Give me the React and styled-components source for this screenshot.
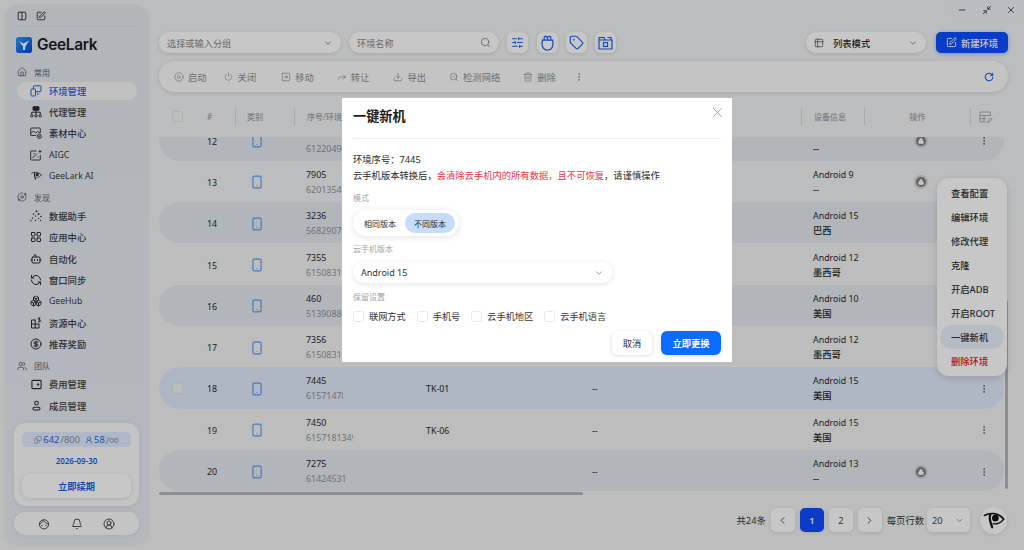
import styled, { createGlobalStyle } from 'styled-components';
import {
	Bell,
	Bot,
	Boxes,
	ChevronDown,
	ChevronLeft,
	ChevronRight,
	CircleDollarSign,
	CirclePlay,
	Columns2,
	CircleUserRound,
	Download,
	EllipsisVertical,
	Forward,
	House,
	LayoutGrid,
	Lock,
	Minimize2,
	Minus,
	Orbit,
	Power,
	RefreshCcw,
	RotateCw,
	Search,
	SearchCheck,
	SlidersHorizontal,
	Smartphone,
	SquareArrowRight,
	SquarePen,
	Table2,
	Tag,
	Trash2,
	UserRound,
	Users,
	X,
} from 'lucide-react';

const GlobalStyle = createGlobalStyle`
	html, body {
		margin: 0;
		padding: 0;
		overflow: hidden;
		background: #f3f4f5;
		font-family: "Noto Sans", "Noto Sans CJK SC", sans-serif;
		color: #222;
	}
	* {
		box-sizing: border-box;
	}
`;

const LogoMark = () => (
	<svg width='16' height='16' viewBox='0 0 16 16'>
		<defs>
			<linearGradient id='logoFill' x1='0' y1='0' x2='1' y2='1'>
				<stop offset='0' stopColor='#2a9bff' />
				<stop offset='1' stopColor='#0b45d8' />
			</linearGradient>
		</defs>
		<rect width='16' height='16' rx='2.5' fill='url(#logoFill)' />
		<path d='M3 4.2 L7.4 6.6 L13 3.6 L9.6 9 L8.9 13 L7 13 L7 9.2 Z' fill='#fff' />
	</svg>
);

const EnvIcon = ({ size = 12 }) => (
	<svg width={size} height={size} viewBox='0 0 12 12' fill='none' stroke='currentColor' strokeWidth='1'>
		<rect x='1' y='4' width='4.5' height='7' rx='0.8' />
		<path d='M3.5 4 V1.5 a0.7 0.7 0 0 1 0.7 -0.7 H10.3 a0.7 0.7 0 0 1 0.7 0.7 V6 a0.7 0.7 0 0 1 -0.7 0.7 H5.5' />
		<path d='M7 9 H9' />
	</svg>
);

const EyeMark = ({ size = 10 }) => (
	<svg width={size} height={size} viewBox='0 0 24 24' fill='none' stroke='currentColor' strokeLinecap='round'>
		<path d='M1.5 7 C8 3.5 17 4 22.5 11' strokeWidth='1.8' />
		<path d='M8 6 C6 10 8 14 10 20' strokeWidth='2.4' />
		<circle cx='13.5' cy='10' r='3.6' fill='currentColor' stroke='none' />
		<path d='M11 16 C15 17 20 15 22.5 11' strokeWidth='1.4' />
	</svg>
);

const ProxyIcon = ({ size = 12 }) => (
	<svg width={size} height={size} viewBox='0 0 12 12' fill='none' stroke='currentColor' strokeWidth='1'>
		<rect x='3' y='0.7' width='6' height='3.6' rx='0.5' fill='currentColor' />
		<path d='M6 4.3 V8 M1.7 8 V6.2 H10.3 V8' />
		<circle cx='1.8' cy='9.8' r='1.2' />
		<circle cx='6' cy='9.8' r='1.2' />
		<circle cx='10.2' cy='9.8' r='1.2' />
	</svg>
);

const MaterialIcon = ({ size = 12 }) => (
	<svg width={size} height={size} viewBox='0 0 12 12' fill='none' stroke='currentColor' strokeWidth='0.9'>
		<path d='M6 8.5 H1.2 a0.5 0.5 0 0 1 -0.5 -0.5 V1.5 a0.5 0.5 0 0 1 0.5 -0.5 H9.8 a0.5 0.5 0 0 1 0.5 0.5 V6' />
		<path d='M0.8 6.5 L3.5 4 L5.5 6 L7.5 4.5 L10 6' />
		<circle cx='9.3' cy='9.3' r='2.1' />
		<path d='M9.3 8.3 V10.3 M8.3 9.3 H10.3' strokeWidth='0.7' />
	</svg>
);

const AigcIcon = ({ size = 12 }) => (
	<svg width={size} height={size} viewBox='0 0 12 12' fill='none' stroke='currentColor' strokeWidth='0.9'>
		<path d='M6.5 2 H1.2 a0.5 0.5 0 0 0 -0.5 0.5 V10.5 a0.5 0.5 0 0 0 0.5 0.5 H9.8 a0.5 0.5 0 0 0 0.5 -0.5 V6' />
		<path d='M2.5 9 L7 4.5' />
		<path d='M10 0.5 L10.6 1.9 L12 2.5 L10.6 3.1 L10 4.5 L9.4 3.1 L8 2.5 L9.4 1.9 Z' fill='currentColor' stroke='none' />
		<circle cx='4' cy='4.7' r='0.6' fill='currentColor' stroke='none' />
		<circle cx='8' cy='8' r='0.6' fill='currentColor' stroke='none' />
	</svg>
);

const WalletIcon = ({ size = 11 }) => (
	<svg width={size} height={size} viewBox='0 0 12 12' fill='none' stroke='currentColor' strokeWidth='1.2'>
		<rect x='1' y='1.5' width='10' height='9' rx='1' />
		<rect x='6.5' y='5' width='2.5' height='2' rx='0.5' fill='currentColor' stroke='none' />
	</svg>
);

const MemberIcon = ({ size = 11 }) => (
	<svg width={size} height={size} viewBox='0 0 12 12' fill='none' stroke='currentColor' strokeWidth='1.1'>
		<circle cx='6' cy='3.4' r='2.1' />
		<rect x='2.2' y='8' width='7.6' height='2.8' rx='1.2' />
	</svg>
);

const FaceIcon = ({ size = 12 }) => (
	<svg width={size} height={size} viewBox='0 0 12 12' fill='none' stroke='currentColor' strokeWidth='0.9'>
		<circle cx='6' cy='6.3' r='4.6' />
		<path d='M1.4 6 C3 5.6 4.5 4.2 5.2 2.4 C6.6 4.6 8.8 5.6 10.6 6' />
		<circle cx='4' cy='7.6' r='0.7' fill='currentColor' stroke='none' />
		<circle cx='8' cy='7.6' r='0.7' fill='currentColor' stroke='none' />
	</svg>
);

const ResourceIcon = ({ size = 12 }) => (
	<svg width={size} height={size} viewBox='0 0 12 12' fill='none' stroke='currentColor' strokeWidth='1'>
		<path d='M6 3 H1.5 V11 H9 V6.5 M1.5 7 H9 M5.2 3 V11' />
		<path d='M10.5 1.2 C9 0.5 7.6 1 8 2 C8.4 3 10.6 2.6 10.8 3.8 C11 4.8 9.2 5 8 4.4 M9.4 0.4 V5.2' strokeWidth='0.8' />
	</svg>
);

const ScatterIcon = ({ size = 12 }) => (
	<svg width={size} height={size} viewBox='0 0 12 12' fill='currentColor'>
		<circle cx='6.5' cy='1.2' r='0.9' />
		<circle cx='3.5' cy='4' r='0.8' />
		<circle cx='8.5' cy='4' r='0.9' />
		<circle cx='5.5' cy='6' r='0.7' />
		<circle cx='11' cy='6.5' r='0.8' />
		<circle cx='8.5' cy='8.5' r='0.7' />
		<circle cx='2.5' cy='8' r='0.7' />
		<circle cx='1' cy='10.8' r='0.7' />
		<circle cx='5.5' cy='10.5' r='0.7' />
		<circle cx='10.5' cy='10.5' r='0.7' />
	</svg>
);

const BagIcon = () => (
	<svg width='15' height='16' viewBox='0 0 15 16' fill='none' stroke='currentColor' strokeWidth='1.2'>
		<path d='M2.3 5.2 H12.7 C13.5 9.5 12.8 15 7.5 15 C2.2 15 1.5 9.5 2.3 5.2 Z' />
		<path d='M4.2 5.2 V2 C5.2 1 6.5 1.4 7.5 2.4 C8.5 1.4 9.8 1 10.8 2 V5.2 M7.5 2.4 V5.2' />
	</svg>
);

const FolderIcon = () => (
	<svg width='15' height='14' viewBox='0 0 15 14' fill='none' stroke='currentColor' strokeWidth='1.2'>
		<path d='M1 4 V13 H14 V4 Z M1 4 V1.5 H6 L7 4' />
		<rect x='5.5' y='6.5' width='4' height='4' />
		<path d='M9.5 1.5 H13 V4' />
	</svg>
);

const TableEditIcon = () => (
	<svg width='14' height='14' viewBox='0 0 14 14' fill='none' stroke='currentColor' strokeWidth='0.9'>
		<path d='M6.5 12 H1.5 a0.5 0.5 0 0 1 -0.5 -0.5 V2.5 a0.5 0.5 0 0 1 0.5 -0.5 H11 a0.5 0.5 0 0 1 0.5 0.5 V6 M1 5.5 H11.5 M1 8.7 H7 M5 5.5 V12' />
		<path d='M8.5 12.5 L9 10.5 L12 7.8 L13.2 9 L10.3 12 Z' />
	</svg>
);

const Page = styled.div`
	position: relative;
	width: 1024px;
	height: 550px;
	display: flex;
	overflow: hidden;
	background: linear-gradient(180deg, #f1f3f5, #f3f3f4);
`;

const Sidebar = styled.aside`
	width: 143px;
	margin: 5px 0 6px 5px;
	padding: 0 9px 9px;
	display: flex;
	flex-direction: column;
	border-radius: 12px;
	background: linear-gradient(180deg, #e4e8ee, #e8ecf3);
	box-shadow: 0 1px 6px rgba(0, 0, 0, 0.05);
`;

const SideTop = styled.div`
	height: 22px;
	flex-shrink: 0;
	padding-left: 3px;
	display: flex;
	align-items: center;
	gap: 9px;
	border-bottom: 1px solid #dcdfe5;
	color: #333;
`;

const LogoRow = styled.div`
	height: 35.5px;
	flex-shrink: 0;
	padding-left: 2px;
	display: flex;
	align-items: center;
	gap: 5px;
`;

const LogoText = styled.span`
	font-family: Inter, sans-serif;
	font-size: 15.4px;
	font-weight: 600;
	letter-spacing: -0.3px;
	color: #1a1d24;
`;

const SectionTitle = styled.div`
	height: 19px;
	flex-shrink: 0;
	margin-left: 3px;
	display: flex;
	align-items: center;
	gap: 7px;
	font-size: 8px;
	color: #5d6066;
`;

const SectionIcon = styled.span`
	width: 10px;
	display: flex;
	justify-content: center;
	color: #555;
`;

const NavItem = styled.div`
	height: 18.3px;
	flex-shrink: 0;
	margin: 0 2px 3px 3px;
	padding-left: 13px;
	display: flex;
	align-items: center;
	gap: 7px;
	border-radius: 9px;
	font-size: ${(props) => (props.$latin ? 8.7 : 9.3)}px;
	font-weight: ${(props) => (props.$latin ? 400 : 500)};
	color: ${(props) => (props.$active ? '#1e5fe6' : '#3a3c40')};
	background: ${(props) => (props.$active ? '#f8f8f9' : 'transparent')};
`;

const NavIcon = styled.span`
	width: 12px;
	display: flex;
	justify-content: center;
	color: ${(props) => (props.$active ? '#1e5fe6' : '#2c2c2e')};
`;

const PlanCard = styled.div`
	margin-top: auto;
	height: 83px;
	padding: 9px 8px 8px;
	display: flex;
	flex-direction: column;
	align-items: stretch;
	border-radius: 12px;
	background: #fbfbfb;
	box-shadow: 0 1px 5px rgba(0, 0, 0, 0.08);
`;

const Quota = styled.div`
	height: 15px;
	display: flex;
	align-items: center;
	justify-content: center;
	gap: 5px;
	border-radius: 5px;
	background: #dfecff;
	font-size: 9.4px;
	color: #8b8f96;
`;

const QuotaPart = styled.span`
	display: flex;
	align-items: center;
	gap: 1px;
	white-space: nowrap;
`;

const QuotaValue = styled.span`
	color: #2a66d8;
`;

const PlanDate = styled.div`
	height: 27px;
	padding-bottom: 1px;
	display: flex;
	align-items: center;
	justify-content: center;
	font-size: 8px;
	font-weight: 600;
	color: #1e5fe6;
`;

const RenewButton = styled.div`
	height: 24px;
	display: flex;
	align-items: center;
	justify-content: center;
	border-radius: 8px;
	background: #fff;
	box-shadow: 0 1px 5px rgba(0, 0, 0, 0.12);
	font-size: 9.3px;
	font-weight: 700;
	color: #1e5fe6;
`;

const SideBar2 = styled.div`
	height: 23px;
	margin-top: 6px;
	padding: 0 24px;
	display: flex;
	align-items: center;
	justify-content: space-between;
	border-radius: 11px;
	background: #fbfbfb;
	box-shadow: 0 1px 4px rgba(0, 0, 0, 0.07);
	color: #3a3a3a;
`;

const Main = styled.main`
	flex: 1;
	min-width: 0;
	padding: 0 16px 0 11px;
	display: flex;
	flex-direction: column;
`;

const TitleBar = styled.div`
	height: 32px;
	flex-shrink: 0;
	margin-right: -16px;
	display: flex;
	justify-content: flex-end;
	align-items: flex-start;
`;

const WindowControls = styled.div`
	width: 74px;
	height: 20px;
	padding: 0 8px 0 7px;
	display: flex;
	align-items: center;
	justify-content: space-between;
	border-bottom-left-radius: 7px;
	background: #eef1f6;
	color: #333;
`;

const ToolRow = styled.div`
	height: 21px;
	flex-shrink: 0;
	display: flex;
	align-items: center;
`;

const PillField = styled.div`
	width: ${(props) => props.$w}px;
	height: 21px;
	margin-right: ${(props) => props.$mr || 0}px;
	padding: 0 8px;
	display: flex;
	align-items: center;
	justify-content: space-between;
	border-radius: 10.5px;
	background: #fff;
	box-shadow: 0 1px 4px rgba(0, 0, 0, 0.12);
	font-size: 9.2px;
	color: #85888d;
`;

const FieldIcon = styled.span`
	display: flex;
	color: #8a8d92;
`;

const IconButton = styled.div`
	width: 21px;
	height: 21px;
	margin-left: ${(props) => props.$ml}px;
	display: flex;
	align-items: center;
	justify-content: center;
	border-radius: 6px;
	background: #fff;
	box-shadow: 0 1px 4px rgba(0, 0, 0, 0.12);
	color: #1e5fe6;
`;

const ModeSelect = styled.div`
	width: 120px;
	height: 21px;
	margin-left: auto;
	padding: 0 8px;
	display: flex;
	align-items: center;
	gap: 9px;
	border-radius: 10.5px;
	background: #fff;
	box-shadow: 0 1px 4px rgba(0, 0, 0, 0.12);
	font-size: 9.3px;
	font-weight: 500;
	color: #2a2a2a;
`;

const ModeArrow = styled.span`
	margin-left: auto;
	display: flex;
	color: #8a8d92;
`;

const NewButton = styled.div`
	width: 72px;
	height: 21px;
	margin-left: 10px;
	display: flex;
	align-items: center;
	justify-content: center;
	gap: 4px;
	border-radius: 5px;
	background: #0d4dff;
	box-shadow: 0 1px 4px rgba(13, 77, 255, 0.4);
	font-size: 9.3px;
	font-weight: 500;
	color: #fff;
`;

const ActionBar = styled.div`
	height: 31px;
	flex-shrink: 0;
	margin-top: 8px;
	padding: 0 14px 0 15px;
	display: flex;
	align-items: center;
	gap: 23px;
	border-radius: 15.5px;
	background: #fbfbfb;
	box-shadow: 0 1px 5px rgba(0, 0, 0, 0.12);
`;

const ActionItem = styled.div`
	display: flex;
	align-items: center;
	gap: 4px;
	margin-right: ${(props) => props.$mr || 0}px;
	font-size: 9.3px;
	color: #8e9196;
`;

const ActionIcon = styled.span`
	width: 10px;
	display: flex;
	justify-content: center;
	color: #94979c;
`;

const RefreshIcon = styled.span`
	margin-left: auto;
	display: flex;
	color: #1e5fe6;
`;

const TableWrap = styled.div`
	position: relative;
	flex-shrink: 0;
	margin-top: 8px;
`;

const HeadRow = styled.div`
	width: 845px;
	height: 36.5px;
	display: grid;
	grid-template-columns: 40px 36px 59px 507px 63px 106px 34px;
	align-items: center;
	padding-bottom: 3px;
	font-size: 8px;
	font-weight: 500;
	color: #9ea2a8;
`;

const HeadCell = styled.div`
	height: 18px;
	padding-left: ${(props) => props.$pl || 0}px;
	padding-right: ${(props) => props.$pr || 0}px;
	display: flex;
	align-items: center;
	justify-content: ${(props) => (props.$center ? 'center' : 'flex-start')};
	border-left: ${(props) => (props.$bar ? '1px solid #d8dadd' : 'none')};
	white-space: nowrap;
`;

const Check = styled.span`
	display: block;
	width: 11px;
	height: 11px;
	border-radius: 2.5px;
	border: 1px solid ${(props) => (props.$plain ? '#e6e8ec' : '#e0e2e5')};
	background: ${(props) => (props.$plain ? '#fff' : '#f1f2f3')};
`;

const Body = styled.div`
	width: 845px;
	height: 355.5px;
	overflow: hidden;
`;

const Rows = styled.div`
	margin-top: -17px;
`;

const Row = styled.div`
	height: 41.3px;
	padding-top: 2px;
	display: grid;
	grid-template-columns: 40px 36px 59px 120px 166px 221px 63px 106px 34px;
	align-items: center;
	border-radius: 20px;
	font-size: 8.9px;
	color: #2a2a2a;
	background: ${(props) =>
		props.$selected ? '#e0ebfb' : props.$striped ? '#e5e9ef' : 'transparent'};
`;

const CheckCell = styled.div`
	padding-left: 13px;
`;

const Cell = styled.div`
	display: flex;
	justify-content: ${(props) => (props.$center ? 'center' : 'flex-start')};
	padding-left: ${(props) => props.$pl || 0}px;
	padding-right: ${(props) => props.$pr || 0}px;
	white-space: nowrap;
	overflow: ${(props) => (props.$overflow ? 'visible' : 'hidden')};
`;

const TypeIcon = styled.span`
	display: flex;
	color: #5e9bf0;
`;

const Stack = styled.div`
	display: flex;
	flex-direction: column;
	gap: 3px;
	line-height: 12px;
`;

const SubLine = styled.div`
	width: ${(props) => props.$w}px;
	overflow: hidden;
	color: #8f9298;
`;

const Region = styled.div`
	font-size: 9.3px;
	font-weight: 500;
	color: #2a2a2a;
`;

const LockBadge = styled.span`
	position: relative;
	left: 4px;
	width: 10px;
	height: 10px;
	display: flex;
	align-items: center;
	justify-content: center;
	border-radius: 50%;
	background: #808080;
	box-shadow: 0 0 0 2px #d2d2d2;
	color: #fff;
`;

const Dots = styled.span`
	display: flex;
	color: #666;
`;

const HScroll = styled.div`
	position: absolute;
	left: 0;
	top: 392px;
	width: 424px;
	height: 3px;
	border-radius: 2px;
	background: #b2b6bd;
`;

const VScroll = styled.div`
	position: absolute;
	right: 0;
	top: 200px;
	bottom: 3px;
	width: 3px;
	border-radius: 2px;
	background: #b2b6bd;
`;

const RowMenu = styled.div`
	position: absolute;
	top: 78px;
	right: 1px;
	width: 70px;
	padding: 3px;
	border-radius: 12px;
	background: #fff;
	box-shadow: 0 2px 8px rgba(0, 0, 0, 0.14);
`;

const RowMenuItem = styled.div`
	height: 24px;
	padding-left: 11px;
	display: flex;
	align-items: center;
	border-radius: 12px;
	font-size: 9.3px;
	white-space: nowrap;
	font-weight: 500;
	color: ${(props) => (props.$danger ? '#e4141c' : '#333')};
	background: ${(props) => (props.$active ? '#eaf1fc' : 'transparent')};
`;

const Pager = styled.div`
	height: 24px;
	flex-shrink: 0;
	margin-top: 16px;
	display: flex;
	align-items: center;
	justify-content: flex-end;
	font-size: 9.3px;
	color: #333;
`;

const PagerText = styled.span`
	margin-right: ${(props) => props.$mr}px;
`;

const PageButton = styled.div`
	width: 24px;
	height: 24px;
	margin-right: 5px;
	display: flex;
	align-items: center;
	justify-content: center;
	border-radius: 5px;
	background: ${(props) => (props.$active ? '#0d4dff' : '#fff')};
	box-shadow: 0 1px 4px rgba(0, 0, 0, 0.12);
	font-weight: ${(props) => (props.$active ? 600 : 400)};
	color: ${(props) => (props.$active ? '#fff' : '#444')};
`;

const SizeSelect = styled.div`
	width: 43px;
	height: 24px;
	margin-right: 10px;
	padding: 0 6px 0 5px;
	display: flex;
	align-items: center;
	justify-content: space-between;
	border-radius: 5px;
	background: #fff;
	box-shadow: 0 1px 4px rgba(0, 0, 0, 0.12);
	color: #444;
`;

const EyeButton = styled.div`
	width: 27px;
	height: 27px;
	margin-right: 1px;
	display: flex;
	align-items: center;
	justify-content: center;
	border-radius: 50%;
	background: #fff;
	box-shadow: 0 1px 4px rgba(0, 0, 0, 0.1);
	color: #111;
`;

const Overlay = styled.div`
	position: absolute;
	inset: 0;
	z-index: 10;
	padding: 98px 0 0 342px;
	background: rgba(0, 0, 0, 0.22);
`;

const Modal = styled.div`
	position: relative;
	width: 390px;
	height: 264px;
	padding: 0 11px 7px;
	display: flex;
	flex-direction: column;
	background: #fff;
`;

const ModalTitle = styled.div`
	height: 41px;
	flex-shrink: 0;
	padding-bottom: 5px;
	display: flex;
	align-items: center;
	border-bottom: 1px solid #eeeff1;
	font-size: 13.2px;
	font-weight: 700;
	color: #1c1c1c;
`;

const CloseIcon = styled.span`
	position: absolute;
	top: 6px;
	right: 6px;
	display: flex;
	color: #999;
`;

const Info = styled.div`
	margin-top: 13px;
	font-size: 9.3px;
	line-height: 15.5px;
	color: #2b2b2b;
	white-space: nowrap;
`;

const Warn = styled.span`
	color: #f5333f;
`;

const FieldLabel = styled.div`
	height: 12px;
	flex-shrink: 0;
	margin-top: ${(props) => props.$mt}px;
	line-height: 12px;
	font-size: 8px;
	color: #a3a5a8;
`;

const Segmented = styled.div`
	align-self: flex-start;
	width: 106px;
	height: 26px;
	margin-top: 6px;
	padding: 0 4px 0 2px;
	display: flex;
	align-items: center;
	border-radius: 13px;
	background: #fff;
	box-shadow: 0 1px 6px rgba(0, 0, 0, 0.12);
`;

const SegmentItem = styled.div`
	width: 50px;
	height: 20px;
	display: flex;
	align-items: center;
	justify-content: center;
	border-radius: 10px;
	font-size: 8px;
	color: #2b2b2b;
	background: ${(props) => (props.$active ? '#c5ddfb' : 'transparent')};
`;

const VersionSelect = styled.div`
	width: 260px;
	height: 21px;
	flex-shrink: 0;
	margin-top: 7px;
	padding: 0 9px 0 8px;
	display: flex;
	align-items: center;
	justify-content: space-between;
	border-radius: 10.5px;
	background: #fff;
	box-shadow: 0 1px 5px rgba(0, 0, 0, 0.12);
	font-size: 9px;
	color: #333;
`;

const CheckRow = styled.div`
	height: 12px;
	flex-shrink: 0;
	margin-top: 7px;
	display: flex;
	align-items: center;
	gap: 11px;
`;

const CheckLabel = styled.label`
	display: flex;
	align-items: center;
	gap: 5px;
	font-size: 9.2px;
	color: #333;
`;

const ModalFooter = styled.div`
	height: 24px;
	flex-shrink: 0;
	margin-top: 9px;
	display: flex;
	justify-content: flex-end;
	gap: 9px;
`;

const FooterButton = styled.div`
	width: ${(props) => (props.$primary ? 60 : 40)}px;
	display: flex;
	align-items: center;
	justify-content: center;
	border-radius: 6px;
	font-size: 9.3px;
	font-weight: ${(props) => (props.$primary ? 600 : 400)};
	color: ${(props) => (props.$primary ? '#fff' : '#333')};
	background: ${(props) => (props.$primary ? '#0a6cff' : '#fff')};
	box-shadow: 0 1px 4px rgba(0, 0, 0, 0.14);
`;

const stroke = 2;

const common = [
	{ label: '环境管理', icon: <EnvIcon />, active: true },
	{ label: '代理管理', icon: <ProxyIcon /> },
	{ label: '素材中心', icon: <MaterialIcon /> },
	{ label: 'AIGC', icon: <AigcIcon />, latin: true },
	{ label: 'GeeLark AI', icon: <EyeMark size={11} />, latin: true },
];

const discover = [
	{ label: '数据助手', icon: <ScatterIcon /> },
	{ label: '应用中心', icon: <LayoutGrid size={12} strokeWidth={stroke} /> },
	{ label: '自动化', icon: <Bot size={12} strokeWidth={stroke} /> },
	{ label: '窗口同步', icon: <RefreshCcw size={12} strokeWidth={stroke} /> },
	{ label: 'GeeHub', icon: <Boxes size={12} strokeWidth={stroke} />, latin: true },
	{ label: '资源中心', icon: <ResourceIcon /> },
	{ label: '推荐奖励', icon: <CircleDollarSign size={12} strokeWidth={stroke} /> },
];

const team = [
	{ label: '费用管理', icon: <WalletIcon /> },
	{ label: '成员管理', icon: <MemberIcon /> },
];

const actions = [
	{ label: '启动', icon: <CirclePlay size={10} strokeWidth={1.8} />, mr: -6 },
	{ label: '关闭', icon: <Power size={9} strokeWidth={1.8} />, mr: 2 },
	{ label: '移动', icon: <SquareArrowRight size={10} strokeWidth={1.8} /> },
	{ label: '转让', icon: <Forward size={10} strokeWidth={1.8} />, mr: 1 },
	{ label: '导出', icon: <Download size={10} strokeWidth={1.8} /> },
	{ label: '检测网络', icon: <SearchCheck size={10} strokeWidth={1.8} /> },
	{ label: '删除', icon: <Trash2 size={10} strokeWidth={1.8} />, mr: -5 },
];

const rows = [
	{ no: 12, code: '7014', serial: '612204960', w: 60, device: 'Android 15', region: '--', lock: true, striped: true },
	{ no: 13, code: '7905', serial: '620135440', w: 60, device: 'Android 9', region: '--', lock: true },
	{ no: 14, code: '3236', serial: '568290700', w: 60, device: 'Android 15', region: '巴西', striped: true },
	{ no: 15, code: '7355', serial: '615083100', w: 60, device: 'Android 12', region: '墨西哥' },
	{ no: 16, code: '460', serial: '513908800', w: 60, device: 'Android 10', region: '美国', striped: true },
	{ no: 17, code: '7356', serial: '615083100', w: 60, device: 'Android 12', region: '墨西哥' },
	{ no: 18, code: '7445', serial: '615714780', w: 37, name: 'TK-01', note: '--', device: 'Android 15', region: '美国', selected: true },
	{ no: 19, code: '7450', serial: '6157181349', w: 47, name: 'TK-06', note: '--', device: 'Android 15', region: '美国' },
	{ no: 20, code: '7275', serial: '614245319', w: 41, note: '--', device: 'Android 13', region: '--', lock: true, striped: true },
];

const menu = ['查看配置', '编辑环境', '修改代理', '克隆', '开启ADB', '开启ROOT', '一键新机', '删除环境'];

const keepOptions = ['联网方式', '手机号', '云手机地区', '云手机语言'];

const renderNav = (items) =>
	items.map((item) => (
		<NavItem key={item.label} $active={item.active} $latin={item.latin}>
			<NavIcon $active={item.active}>{item.icon}</NavIcon>
			{item.label}
		</NavItem>
	));

export default function App() {
	return (
		<>
			<GlobalStyle />
			<Page>
				<Sidebar>
					<SideTop>
						<Columns2 size={10} strokeWidth={2.2} />
						<SquarePen size={10} strokeWidth={2.2} />
					</SideTop>
					<LogoRow>
						<LogoMark />
						<LogoText>GeeLark</LogoText>
					</LogoRow>
					<SectionTitle>
						<SectionIcon>
							<House size={10} strokeWidth={1.8} />
						</SectionIcon>
						常用
					</SectionTitle>
					{renderNav(common)}
					<SectionTitle>
						<SectionIcon>
							<Orbit size={10} strokeWidth={1.8} />
						</SectionIcon>
						发现
					</SectionTitle>
					{renderNav(discover)}
					<SectionTitle>
						<SectionIcon>
							<Users size={10} strokeWidth={1.8} />
						</SectionIcon>
						团队
					</SectionTitle>
					{renderNav(team)}
					<PlanCard>
						<Quota>
							<QuotaPart>
								<EnvIcon size={8} />
								<QuotaValue>642</QuotaValue>/800
							</QuotaPart>
							<QuotaPart>
								<UserRound size={8} color='#2a66d8' />
								<QuotaValue>58</QuotaValue>/∞
							</QuotaPart>
						</Quota>
						<PlanDate>2026-09-30</PlanDate>
						<RenewButton>立即续期</RenewButton>
					</PlanCard>
					<SideBar2>
						<FaceIcon />
						<Bell size={12} strokeWidth={1.8} />
						<CircleUserRound size={12} strokeWidth={1.8} />
					</SideBar2>
				</Sidebar>
				<Main>
					<TitleBar>
						<WindowControls>
							<Minus size={10} strokeWidth={2} />
							<Minimize2 size={10} strokeWidth={2} />
							<X size={10} strokeWidth={2} />
						</WindowControls>
					</TitleBar>
					<ToolRow>
						<PillField $w={182} $mr={8}>
							选择或输入分组
							<FieldIcon>
								<ChevronDown size={10} strokeWidth={2.4} />
							</FieldIcon>
						</PillField>
						<PillField $w={150}>
							环境名称
							<FieldIcon>
								<Search size={11} strokeWidth={2} />
							</FieldIcon>
						</PillField>
						<IconButton $ml={8}>
							<SlidersHorizontal size={13} strokeWidth={2} />
						</IconButton>
						<IconButton $ml={9}>
							<BagIcon />
						</IconButton>
						<IconButton $ml={8}>
							<Tag size={15} strokeWidth={1.8} />
						</IconButton>
						<IconButton $ml={8}>
							<FolderIcon />
						</IconButton>
						<ModeSelect>
							<Table2 size={10} strokeWidth={1.8} color='#555' />
							列表模式
							<ModeArrow>
								<ChevronDown size={10} strokeWidth={2.4} />
							</ModeArrow>
						</ModeSelect>
						<NewButton>
							<SquarePen size={11} strokeWidth={2} />
							新建环境
						</NewButton>
					</ToolRow>
					<ActionBar>
						{actions.map((action) => (
							<ActionItem key={action.label} $mr={action.mr}>
								<ActionIcon>{action.icon}</ActionIcon>
								{action.label}
							</ActionItem>
						))}
						<ActionIcon>
							<EllipsisVertical size={10} strokeWidth={2.2} />
						</ActionIcon>
						<RefreshIcon>
							<RotateCw size={10} strokeWidth={2.6} />
						</RefreshIcon>
					</ActionBar>
					<TableWrap>
						<HeadRow>
							<CheckCell>
								<Check />
							</CheckCell>
							<HeadCell $pl={8}>#</HeadCell>
							<HeadCell $bar $pl={11}>
								类别
							</HeadCell>
							<HeadCell $bar $pl={12}>
								序号/环境
							</HeadCell>
							<HeadCell $bar $pl={12}>
								设备信息
							</HeadCell>
							<HeadCell $bar $center>
								操作
							</HeadCell>
							<HeadCell $bar $center $pr={4}>
								<TableEditIcon />
							</HeadCell>
						</HeadRow>
						<Body>
							<Rows>
								{rows.map((row) => (
									<Row key={row.no} $striped={row.striped} $selected={row.selected}>
										<CheckCell>{row.selected && <Check />}</CheckCell>
										<Cell $pl={8}>{row.no}</Cell>
										<Cell $pl={15}>
											<TypeIcon>
												<Smartphone size={14} strokeWidth={2} />
											</TypeIcon>
										</Cell>
										<Cell $pl={12}>
											<Stack>
												<div>{row.code}</div>
												<SubLine $w={row.w}>{row.serial}</SubLine>
											</Stack>
										</Cell>
										<Cell $pl={12}>{row.name}</Cell>
										<Cell $pl={12}>{row.note}</Cell>
										<Cell $pl={12} $overflow>
											<Stack>
												<div>{row.device}</div>
												<Region>{row.region}</Region>
											</Stack>
										</Cell>
										<Cell $center $overflow>
											{row.lock && (
												<LockBadge>
													<Lock size={6} strokeWidth={2.5} fill='#fff' />
												</LockBadge>
											)}
										</Cell>
										<Cell $center $pr={6}>
											<Dots>
												<EllipsisVertical size={10} strokeWidth={2.4} />
											</Dots>
										</Cell>
									</Row>
								))}
							</Rows>
						</Body>
						<HScroll />
						<VScroll />
						<RowMenu>
							{menu.map((item) => (
								<RowMenuItem key={item} $active={item === '一键新机'} $danger={item === '删除环境'}>
									{item}
								</RowMenuItem>
							))}
						</RowMenu>
					</TableWrap>
					<Pager>
						<PagerText $mr={5}>共24条</PagerText>
						<PageButton>
							<ChevronLeft size={11} />
						</PageButton>
						<PageButton $active>1</PageButton>
						<PageButton>2</PageButton>
						<PageButton>
							<ChevronRight size={11} />
						</PageButton>
						<PagerText $mr={3}>每页行数</PagerText>
						<SizeSelect>
							20
							<FieldIcon>
								<ChevronDown size={9} strokeWidth={2.4} />
							</FieldIcon>
						</SizeSelect>
						<EyeButton>
							<EyeMark size={22} />
						</EyeButton>
					</Pager>
				</Main>
				<Overlay>
					<Modal>
						<ModalTitle>一键新机</ModalTitle>
						<CloseIcon>
							<X size={17} strokeWidth={1.2} />
						</CloseIcon>
						<Info>
							<div>环境序号：7445</div>
							<div>
								云手机版本转换后，<Warn>会清除云手机内的所有数据，且不可恢复</Warn>，请谨慎操作
							</div>
						</Info>
						<FieldLabel $mt={9}>模式</FieldLabel>
						<Segmented>
							<SegmentItem>相同版本</SegmentItem>
							<SegmentItem $active>不同版本</SegmentItem>
						</Segmented>
						<FieldLabel $mt={7}>云手机版本</FieldLabel>
						<VersionSelect>
							Android 15
							<FieldIcon>
								<ChevronDown size={10} strokeWidth={2} />
							</FieldIcon>
						</VersionSelect>
						<FieldLabel $mt={8}>保留设置</FieldLabel>
						<CheckRow>
							{keepOptions.map((option) => (
								<CheckLabel key={option}>
									<Check $plain />
									{option}
								</CheckLabel>
							))}
						</CheckRow>
						<ModalFooter>
							<FooterButton>取消</FooterButton>
							<FooterButton $primary>立即更换</FooterButton>
						</ModalFooter>
					</Modal>
				</Overlay>
			</Page>
		</>
	);
}
